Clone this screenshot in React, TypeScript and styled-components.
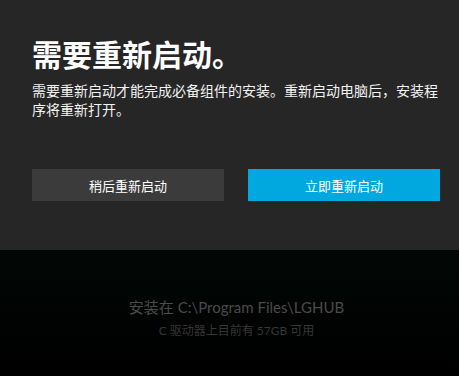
import React from 'react';
import styled, { createGlobalStyle } from 'styled-components';

const GlobalStyle = createGlobalStyle`
  html, body {
    margin: 0;
    padding: 0;
    background: #000;
  }
  body {
    font-family: "Noto Sans CJK SC", "Noto Sans", sans-serif;
  }
`;

const Page = styled.div`
  width: 459px;
  height: 376px;
  display: flex;
  flex-direction: column;
  overflow: hidden;
  background: linear-gradient(180deg, #06190f 0%, #030c08 40%, #000 100%);
`;

const Dialog = styled.section`
  height: 250px;
  box-sizing: border-box;
  background: #262626;
  padding: 32px 18px 0 32px;
  display: flex;
  flex-direction: column;
`;

const Title = styled.h1`
  margin: 0;
  color: #fff;
  font-size: 30px;
  font-weight: 700;
  line-height: 42px;
`;

const Message = styled.p`
  margin: 7px 0 0;
  color: #f2f2f2;
  font-size: 14px;
  line-height: 19px;
`;

const Actions = styled.div`
  display: flex;
  gap: 24px;
  margin-top: 50px;
`;

const ActionButton = styled.button<{ $primary?: boolean }>`
  width: 192px;
  height: 32px;
  border: none;
  padding: 0;
  font-family: inherit;
  font-size: 13px;
  color: #fff;
  background: ${p => (p.$primary ? '#00a8df' : '#3b3b3b')};
  cursor: pointer;
`;

const Footer = styled.div`
  flex: 1;
  display: flex;
  flex-direction: column;
  align-items: center;
  padding: 47px 0 0 14px;
`;

const InstallPath = styled.div`
  color: #4a4a4a;
  font-size: 15px;
  line-height: 21px;
  font-family: "Lato", "Noto Sans CJK SC", sans-serif;
`;

const FreeSpace = styled.div`
  margin-top: 4px;
  color: #363636;
  font-size: 12px;
  line-height: 18px;
  font-family: "Lato", "Noto Sans CJK SC", sans-serif;
`;

export default function App() {
  return (
    <>
      <GlobalStyle />
      <Page>
        <Dialog>
          <Title>需要重新启动。</Title>
          <Message>需要重新启动才能完成必备组件的安装。重新启动电脑后，安装程序将重新打开。</Message>
          <Actions>
            <ActionButton>稍后重新启动</ActionButton>
            <ActionButton $primary>立即重新启动</ActionButton>
          </Actions>
        </Dialog>
        <Footer>
          <InstallPath>安装在 C:\Program Files\LGHUB</InstallPath>
          <FreeSpace>C 驱动器上目前有 57GB 可用</FreeSpace>
        </Footer>
      </Page>
    </>
  );
}
